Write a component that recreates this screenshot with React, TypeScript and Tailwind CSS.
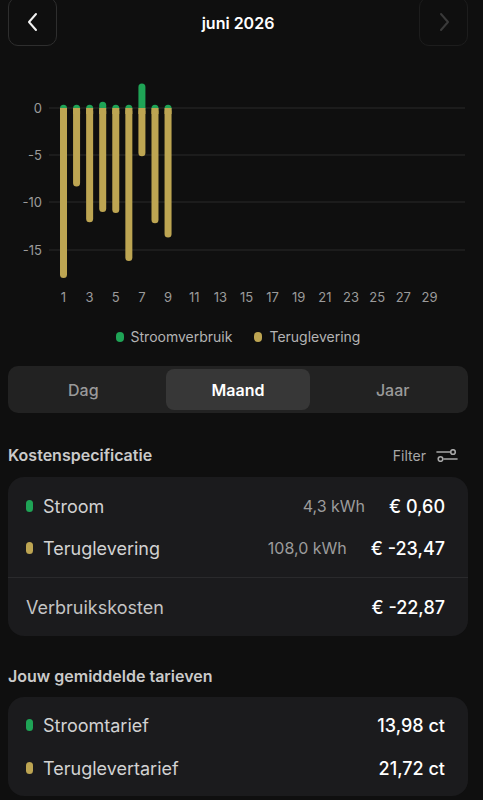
const font = { fontFamily: 'Inter, "Noto Sans", sans-serif' }

// dagwaarden juni: [verbruik, teruglevering]
const days: [number, number][] = [
  [0.35, -18],
  [0.35, -8.3],
  [0.35, -12.1],
  [0.65, -11],
  [0.35, -11.1],
  [0.35, -16.2],
  [2.6, -5.1],
  [0.35, -12.2],
  [0.35, -13.7],
]

const ZERO = 108
const UNIT = 9.45
const dayX = (d: number) => 63.5 + (d - 1) * 13.07

function Chart() {
  const grid = [
    { v: 0, y: 108 },
    { v: -5, y: 155 },
    { v: -10, y: 202 },
    { v: -15, y: 250 },
  ]
  return (
    <svg width="483" height="262" viewBox="0 50 483 262" className="block -ml-2">
      {grid.map(g => (
        <g key={g.v}>
          <line x1="49" x2="465" y1={g.y} y2={g.y} stroke="#2b2b2b" strokeWidth="1" />
          <text x="42" y={g.y + 4.5} textAnchor="end" fontSize="13" fill="#9b9b9b" style={font}>
            {g.v}
          </text>
        </g>
      ))}
      {days.map(([up, down], i) => {
        const x = dayX(i + 1) - 3.5
        const top = ZERO - up * UNIT
        const bottom = ZERO - down * UNIT
        return (
          <g key={i}>
            <rect x={x} y={top} width="7" height={ZERO - top + 4} rx="3.5" fill="#1fa456" />
            <rect x={x} y={ZERO} width="7" height={bottom - ZERO} rx="3.5" fill="#bda552" />
            <rect x={x} y={ZERO} width="7" height="6" fill="#bda552" />
          </g>
        )
      })}
      {Array.from({ length: 15 }, (_, i) => i * 2 + 1).map(d => (
        <text key={d} x={dayX(d)} y="302" textAnchor="middle" fontSize="13" fill="#9b9b9b" style={font}>
          {d}
        </text>
      ))}
    </svg>
  )
}

function Dot({ color }: { color: string }) {
  return <span className={`inline-block w-[7px] h-[12px] rounded-full ${color}`} />
}

function FilterIcon() {
  return (
    <svg width="22" height="13" viewBox="0 0 22 13" fill="none" stroke="#a8a8a8" strokeWidth="1.6" strokeLinecap="round">
      <line x1="1" y1="3" x2="14" y2="3" />
      <circle cx="17" cy="3" r="2.3" />
      <circle cx="4.5" cy="10" r="2.3" />
      <line x1="8" y1="10" x2="21" y2="10" />
    </svg>
  )
}

export default function App() {
  return (
    <div className="w-[483px] h-[800px] overflow-hidden bg-[#0f0f0f] text-white pl-2 pr-[15px]" style={font}>
      <div className="flex items-center justify-between -mt-[3px] h-[49px]">
        <button className="w-[49px] h-[49px] rounded-[10px] border border-[#2e2e2e] flex items-center justify-center">
          <svg width="14" height="20" viewBox="0 0 14 20" fill="none" stroke="#f2f2f2" strokeWidth="2" strokeLinecap="round" strokeLinejoin="round">
            <path d="M10 2 L3 10 L10 18" />
          </svg>
        </button>
        <div className="text-[16px] font-semibold text-white mt-[3px]">juni 2026</div>
        <button className="w-[49px] h-[49px] rounded-[10px] border border-[#1d1d1d] flex items-center justify-center">
          <svg width="14" height="20" viewBox="0 0 14 20" fill="none" stroke="#3a3a3a" strokeWidth="2" strokeLinecap="round" strokeLinejoin="round">
            <path d="M4 2 L11 10 L4 18" />
          </svg>
        </button>
      </div>

      <div className="mt-[4px]">
        <Chart />
      </div>

      <div className="flex justify-center items-center gap-[22px] mt-[14px] text-[14px] text-[#b4b4b4]">
        <div className="flex items-center gap-[7px]">
          <span className="inline-block w-[8px] h-[10px] rounded-full bg-[#1fa456]" />
          Stroomverbruik
        </div>
        <div className="flex items-center gap-[7px]">
          <span className="inline-block w-[8px] h-[10px] rounded-full bg-[#bda552]" />
          Teruglevering
        </div>
      </div>

      <div className="mt-[19px] h-[47px] rounded-[10px] bg-[#222222] p-[3px] grid grid-cols-3 gap-[10px]">
        <div className="flex items-center justify-center text-[16px] font-medium text-[#9a9a9a]">Dag</div>
        <div className="flex items-center justify-center rounded-[8px] bg-[#373737] text-[16px] font-semibold text-white">
          Maand
        </div>
        <div className="flex items-center justify-center text-[16px] font-medium text-[#9a9a9a]">Jaar</div>
      </div>

      <div className="flex items-center justify-between pr-[10px] mt-[30px]">
        <div className="text-[16px] font-semibold text-[#cacaca]">Kostenspecificatie</div>
        <div className="flex items-center gap-[10px] text-[14px] text-[#a8a8a8]">
          Filter
          <FilterIcon />
        </div>
      </div>

      <div className="mt-[10px] rounded-[16px] bg-[#1b1b1d]">
        <div className="pl-[18px] pr-[23px] pt-[18px] pb-[18px] flex flex-col gap-[20px]">
          <div className="flex items-center h-[22px]">
            <Dot color="bg-[#1fa456]" />
            <span className="ml-[10px] text-[18px] text-[#d2d2d2]">Stroom</span>
            <span className="ml-auto text-[16px] text-[#9c9c9c]">4,3 kWh</span>
            <span className="ml-[24px] text-[18px] font-medium text-white">€ 0,60</span>
          </div>
          <div className="flex items-center h-[22px]">
            <Dot color="bg-[#bda552]" />
            <span className="ml-[10px] text-[18px] text-[#d2d2d2]">Teruglevering</span>
            <span className="ml-auto text-[16px] text-[#9c9c9c]">108,0 kWh</span>
            <span className="ml-[24px] text-[18px] font-medium text-white">€ -23,47</span>
          </div>
        </div>
        <div className="h-px bg-[#2a2a2c]" />
        <div className="flex items-center pl-[18px] pr-[23px] h-[58px]">
          <span className="text-[18px] text-[#c4c4c4]">Verbruikskosten</span>
          <span className="ml-auto text-[18px] font-medium text-white">€ -22,87</span>
        </div>
      </div>

      <div className="mt-[28px] text-[16px] font-semibold text-[#cacaca]">Jouw gemiddelde tarieven</div>

      <div className="mt-[9px] rounded-[16px] bg-[#1b1b1d] pl-[18px] pr-[23px] pt-[17px] pb-[17px] flex flex-col gap-[21px]">
        <div className="flex items-center h-[22px]">
          <Dot color="bg-[#1fa456]" />
          <span className="ml-[10px] text-[18px] text-[#d2d2d2]">Stroomtarief</span>
          <span className="ml-auto text-[18px] font-medium text-white">13,98 ct</span>
        </div>
        <div className="flex items-center h-[22px]">
          <Dot color="bg-[#bda552]" />
          <span className="ml-[10px] text-[18px] text-[#d2d2d2]">Teruglevertarief</span>
          <span className="ml-auto text-[18px] font-medium text-white">21,72 ct</span>
        </div>
      </div>
    </div>
  )
}
